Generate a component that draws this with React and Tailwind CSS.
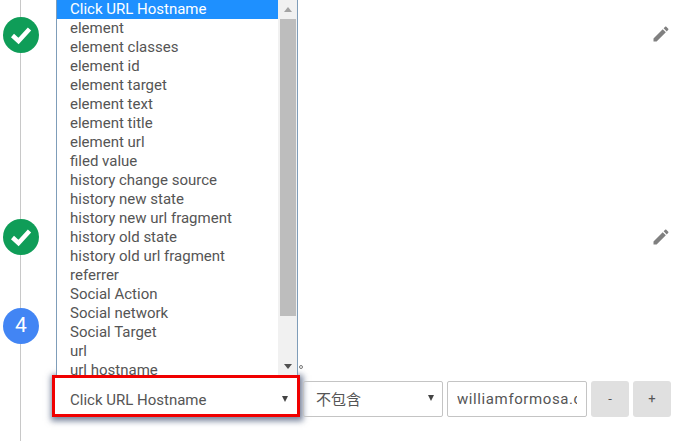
const options = [
  'Click URL Hostname',
  'element',
  'element classes',
  'element id',
  'element target',
  'element text',
  'element title',
  'element url',
  'filed value',
  'history change source',
  'history new state',
  'history new url fragment',
  'history old state',
  'history old url fragment',
  'referrer',
  'Social Action',
  'Social network',
  'Social Target',
  'url',
  'url hostname',
];

const DoneBadge = () => (
  <div className="flex items-center justify-center w-9 h-9 rounded-full bg-[#0f9d58]">
    <svg width="36" height="36" viewBox="0 0 36 36" fill="none">
      <path d="M9.5 18.5l6 5.5L26.5 12" stroke="#fff" strokeWidth="4.5" />
    </svg>
  </div>
);

const EditIcon = () => (
  <svg width="20" height="20" viewBox="0 0 24 24" fill="#808080">
    <path d="M3 17.25V21h3.75L17.81 9.94l-3.75-3.75L3 17.25zM20.71 7.04c.39-.39.39-1.02 0-1.41l-2.34-2.34c-.39-.39-1.02-.39-1.41 0l-1.83 1.83 3.75 3.75 1.83-1.83z" />
  </svg>
);

const Caret = () => (
  <svg width="6" height="6" viewBox="0 0 6 6" className="shrink-0 -mt-[2px]">
    <path d="M0 0h6L3 6z" fill="#444" />
  </svg>
);

// open list of the select, lies over the steps
const OptionList = () => (
  <div className="absolute left-[56px] top-0 w-[242px] h-[375px] flex overflow-hidden bg-white border-x border-[#7f9db9]">
    <ul className="flex-1 min-w-0">
      {options.map((opt, i) => (
        <li
          key={opt}
          className={`h-[19px] leading-[19px] pl-[13px] whitespace-nowrap ${
            i === 0 ? 'bg-[#1e90ff] text-white' : ''
          }`}
        >
          {opt}
        </li>
      ))}
    </ul>
    <div className="w-[19px] flex flex-col items-center bg-[#f1f1f1]">
      <div className="h-[19px] flex items-center justify-center">
        <svg width="8" height="5" viewBox="0 0 8 5">
          <path d="M0 5h8L4 0z" fill="#a3a3a3" />
        </svg>
      </div>
      <div className="w-[16px] h-[297px] bg-[#bdbdbd]" />
      <div className="mt-auto h-[11px] flex items-start justify-center">
        <svg width="8" height="5" viewBox="0 0 8 5">
          <path d="M0 0h8L4 5z" fill="#505050" />
        </svg>
      </div>
    </div>
  </div>
);

export default function App() {
  return (
    <div className="relative w-[680px] h-[441px] overflow-hidden bg-white font-['Roboto',sans-serif] text-[15px] text-[#555]">
      <div className="flex h-full">
        {/* step column */}
        <div className="relative w-[52px] shrink-0 pl-[3px] pt-[17px]">
          <div className="absolute left-[20px] top-0 bottom-0 w-px bg-[#c8c8c8]" />
          <div className="relative flex flex-col gap-[53px]">
            <div className="flex flex-col gap-[166px]">
              <DoneBadge />
              <DoneBadge />
            </div>
            <div className="flex items-center justify-center w-9 h-9 rounded-full bg-[#4285f4] text-white text-[21px]">
              4
            </div>
          </div>
        </div>

        <div className="flex-1 flex flex-col">
          {/* edit icons */}
          <div className="flex flex-col items-end gap-[183px] pt-[24px] pr-[9px] h-[375px]">
            <EditIcon />
            <EditIcon />
          </div>

          {/* condition row */}
          <div className="flex items-start">
            <div className="flex items-center justify-between w-[248px] h-[42px] pt-[8px] pl-[15px] pr-[9px] border-[3px] border-[#f00000] bg-white shadow-[1px_2px_6px_2px_rgba(30,50,90,0.6)]">
              <span className="whitespace-nowrap">Click URL Hostname</span>
              <Caret />
            </div>
            <div className="flex items-center justify-between w-[140px] h-[36px] mt-[6px] ml-[3px] pl-[12px] pr-[8px] border border-[#c4c4c4] rounded-[2px] font-['Noto_Sans_CJK_TC','Roboto',sans-serif]">
              <span>不包含</span>
              <Caret />
            </div>
            <div className="w-[140px] h-[36px] mt-[6px] ml-[4px] px-[9px] border border-[#c4c4c4] rounded-[2px]">
              <div className="overflow-hidden leading-[34px] whitespace-nowrap tracking-[0.6px]">
                williamformosa.com
              </div>
            </div>
            <div className="flex items-center justify-center w-[38px] h-[36px] mt-[6px] ml-[4px] rounded-[3px] bg-[#e0e0e0] text-[13px]">
              -
            </div>
            <div className="flex items-center justify-center w-[38px] h-[36px] mt-[6px] ml-[4px] rounded-[3px] bg-[#e0e0e0] text-[13px]">
              +
            </div>
          </div>
        </div>
      </div>

      <OptionList />
      <span className="absolute left-[299px] top-[365px] w-[4px] h-[4px] rounded-full border border-[#777]" />
    </div>
  );
}
